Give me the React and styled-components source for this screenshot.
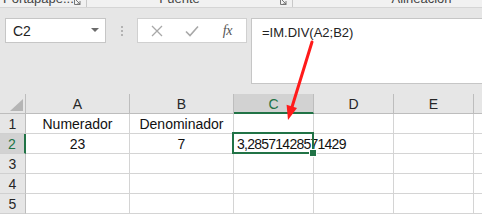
import React from 'react';
import styled, { createGlobalStyle } from 'styled-components';

const GlobalStyle = createGlobalStyle`
  html, body {
    margin: 0;
    padding: 0;
    background: #e6e6e6;
    font-family: "Liberation Sans", Arial, sans-serif;
  }
  * { box-sizing: border-box; }
`;

const green = '#217346';

const Page = styled.div`
  position: relative;
  width: 482px;
  height: 214px;
  overflow: hidden;
  background: #e6e6e6;
`;

/* ribbon group labels, cut off at the top of the shot */
const Ribbon = styled.div`
  height: 8px;
  background: #f1f1f1;
  border-bottom: 1px solid #d5d5d5;
  overflow: hidden;
  display: flex;
  align-items: flex-start;
`;

const RibbonGroup = styled.div`
  position: relative;
  flex: none;
  width: ${p => p.$width}px;
  height: 7px;
  border-right: 1px solid #c8c8c8;
  display: flex;
  justify-content: ${p => (p.$left ? 'flex-start' : 'center')};
  padding: 0 ${p => p.$padRight || 0}px 0 ${p => p.$padLeft || 0}px;
`;

const RibbonLabel = styled.span`
  margin-top: -8px;
  font-size: 13px;
  line-height: 13px;
  color: #444;
  white-space: nowrap;
`;

const Launcher = styled.svg`
  position: absolute;
  right: 5px;
  top: -2px;
`;

const FormulaArea = styled.div`
  height: 86px;
  padding: 10px 0 0 5px;
  display: flex;
  align-items: flex-start;
`;

const NameBox = styled.div`
  width: 101px;
  height: 25px;
  background: #fff;
  border: 1px solid #c6c6c6;
  display: flex;
  align-items: center;
  justify-content: space-between;
  padding: 0 6px 0 7px;
  font-size: 14px;
  color: #222;
`;

const Grip = styled.div`
  width: 31px;
  height: 25px;
  display: flex;
  flex-direction: column;
  align-items: center;
  justify-content: center;
  gap: 2px;

  span {
    width: 2px;
    height: 2px;
    background: #b3b3b3;
  }
`;

const ToolBox = styled.div`
  width: 110px;
  height: 25px;
  background: #fff;
  border: 1px solid #d0d0d0;
  display: grid;
  grid-template-columns: repeat(3, 1fr);
  align-items: center;
  justify-items: center;
  padding: 0 1px;
`;

const Fx = styled.span`
  font-family: "Liberation Serif", "Times New Roman", serif;
  font-style: italic;
  font-size: 14px;
  color: #555;
  letter-spacing: -0.5px;
`;

const FormulaInput = styled.div`
  flex: 1;
  margin-left: 4px;
  height: 66px;
  background: #fff;
  border: 1px solid #c6c6c6;
  border-right: none;
  padding: 5px 0 0 10px;
  font-size: 13px;
  line-height: 18px;
  color: #222;
`;

const Sheet = styled.div`
  display: grid;
  width: max-content;
  grid-template-columns: 26px 104px 104px 80px 80px 80px 80px;
  grid-auto-rows: 20px;
  background: #fff;
`;

const ColHead = styled.div`
  background: ${p => (p.$active ? '#d2d2d2' : '#e6e6e6')};
  color: ${p => (p.$active ? green : '#262626')};
  border-right: 1px solid #bdbdbd;
  border-bottom: ${p => (p.$active ? `2px solid ${green}` : '1px solid #bdbdbd')};
  font-size: 14px;
  line-height: 18px;
  text-align: center;
  padding-top: 1px;
`;

const Corner = styled.div`
  background: #e6e6e6;
  border-right: 1px solid #bdbdbd;
  border-bottom: 1px solid #bdbdbd;
  display: flex;
  align-items: flex-end;
  justify-content: flex-end;
  padding: 0 2px 2px 0;
`;

const RowHead = styled.div`
  background: ${p => (p.$active ? '#d2d2d2' : '#e6e6e6')};
  color: ${p => (p.$active ? green : '#262626')};
  border-right: ${p => (p.$active ? `2px solid ${green}` : '1px solid #bdbdbd')};
  border-bottom: 1px solid #d0d0d0;
  font-size: 14px;
  line-height: 18px;
  text-align: center;
  padding-top: 1px;
`;

const Cell = styled.div`
  position: relative;
  border-right: 1px solid #d4d4d4;
  border-bottom: 1px solid #d4d4d4;
  font-size: 14px;
  line-height: 18px;
  padding: 1px 3px 0;
  color: #111;
  text-align: ${p => p.$align || 'left'};
  letter-spacing: ${p => (p.$tight ? '-0.75px' : 'normal')};
  white-space: nowrap;
  overflow: visible;
`;

const Selection = styled.div`
  position: absolute;
  left: -2px;
  top: -2px;
  right: -1px;
  bottom: -1px;
  border: 2px solid ${green};
  z-index: 2;
  pointer-events: none;
`;

const FillHandle = styled.div`
  position: absolute;
  right: -4px;
  bottom: -4px;
  width: 6px;
  height: 6px;
  background: ${green};
  outline: 1px solid #fff;
`;

const ArrowLayer = styled.svg`
  position: absolute;
  left: 0;
  top: 0;
  z-index: 5;
  pointer-events: none;
`;

const columns = ['A', 'B', 'C', 'D', 'E', 'F'];

const data = {
  1: { A: 'Numerador', B: 'Denominador' },
  2: { A: '23', B: '7', C: '3,28571428571429' },
};

const LauncherIcon = () => (
  <Launcher width="7" height="7" viewBox="0 0 7 7">
    <path d="M0.5 0.5 V6.5 H6.5" fill="none" stroke="#777" strokeWidth="1" />
    <path d="M2 2 L6 6 M6 3 V6 H3" fill="none" stroke="#777" strokeWidth="1" />
  </Launcher>
);

export default function App() {
  return (
    <>
      <GlobalStyle />
      <Page>
        <Ribbon>
          <RibbonGroup $width={87} $left $padLeft={3}>
            <RibbonLabel>Portapape...</RibbonLabel>
            <LauncherIcon />
          </RibbonGroup>
          <RibbonGroup $width={206} $padRight={20}>
            <RibbonLabel>Fuente</RibbonLabel>
            <LauncherIcon />
          </RibbonGroup>
          <RibbonGroup $width={220} $padLeft={38}>
            <RibbonLabel>Alineación</RibbonLabel>
          </RibbonGroup>
        </Ribbon>

        <FormulaArea>
          <NameBox>
            C2
            <svg width="8" height="5" viewBox="0 0 8 5">
              <path d="M0 0 H8 L4 4 Z" fill="#6b6b6b" />
            </svg>
          </NameBox>
          <Grip>
            <span />
            <span />
            <span />
          </Grip>
          <ToolBox>
            <svg width="12" height="12" viewBox="0 0 12 12">
              <path d="M1 1 L11 11 M11 1 L1 11" stroke="#a8a8a8" strokeWidth="1.3" fill="none" />
            </svg>
            <svg width="14" height="12" viewBox="0 0 14 12">
              <path d="M1 6.5 L5 10.5 L13 1.5" stroke="#a8a8a8" strokeWidth="1.6" fill="none" />
            </svg>
            <Fx>fx</Fx>
          </ToolBox>
          <FormulaInput>=IM.DIV(A2;B2)</FormulaInput>
        </FormulaArea>

        <Sheet>
          <Corner>
            <svg width="13" height="12" viewBox="0 0 13 12">
              <path d="M13 0 V12 H0 Z" fill="#b5b5b5" />
            </svg>
          </Corner>
          {columns.map(c => (
            <ColHead key={c} $active={c === 'C'}>{c}</ColHead>
          ))}
          {[1, 2, 3, 4, 5].map(r => (
            <React.Fragment key={r}>
              <RowHead $active={r === 2}>{r}</RowHead>
              {columns.map(c => {
                const value = data[r]?.[c];
                const selected = r === 2 && c === 'C';
                return (
                  <Cell
                    key={c}
                    $align={c === 'A' || c === 'B' ? 'center' : 'left'}
                    $tight={selected}
                  >
                    {value}
                    {selected && (
                      <Selection>
                        <FillHandle />
                      </Selection>
                    )}
                  </Cell>
                );
              })}
            </React.Fragment>
          ))}
        </Sheet>

        <ArrowLayer width="482" height="214" viewBox="0 0 482 214">
          <line x1="312" y1="42" x2="292" y2="107" stroke="#ff1a1a" strokeWidth="3" strokeLinecap="round" />
          <polygon points="288,120 286.6,104.8 297,108" fill="#ff1a1a" />
        </ArrowLayer>
      </Page>
    </>
  );
}
